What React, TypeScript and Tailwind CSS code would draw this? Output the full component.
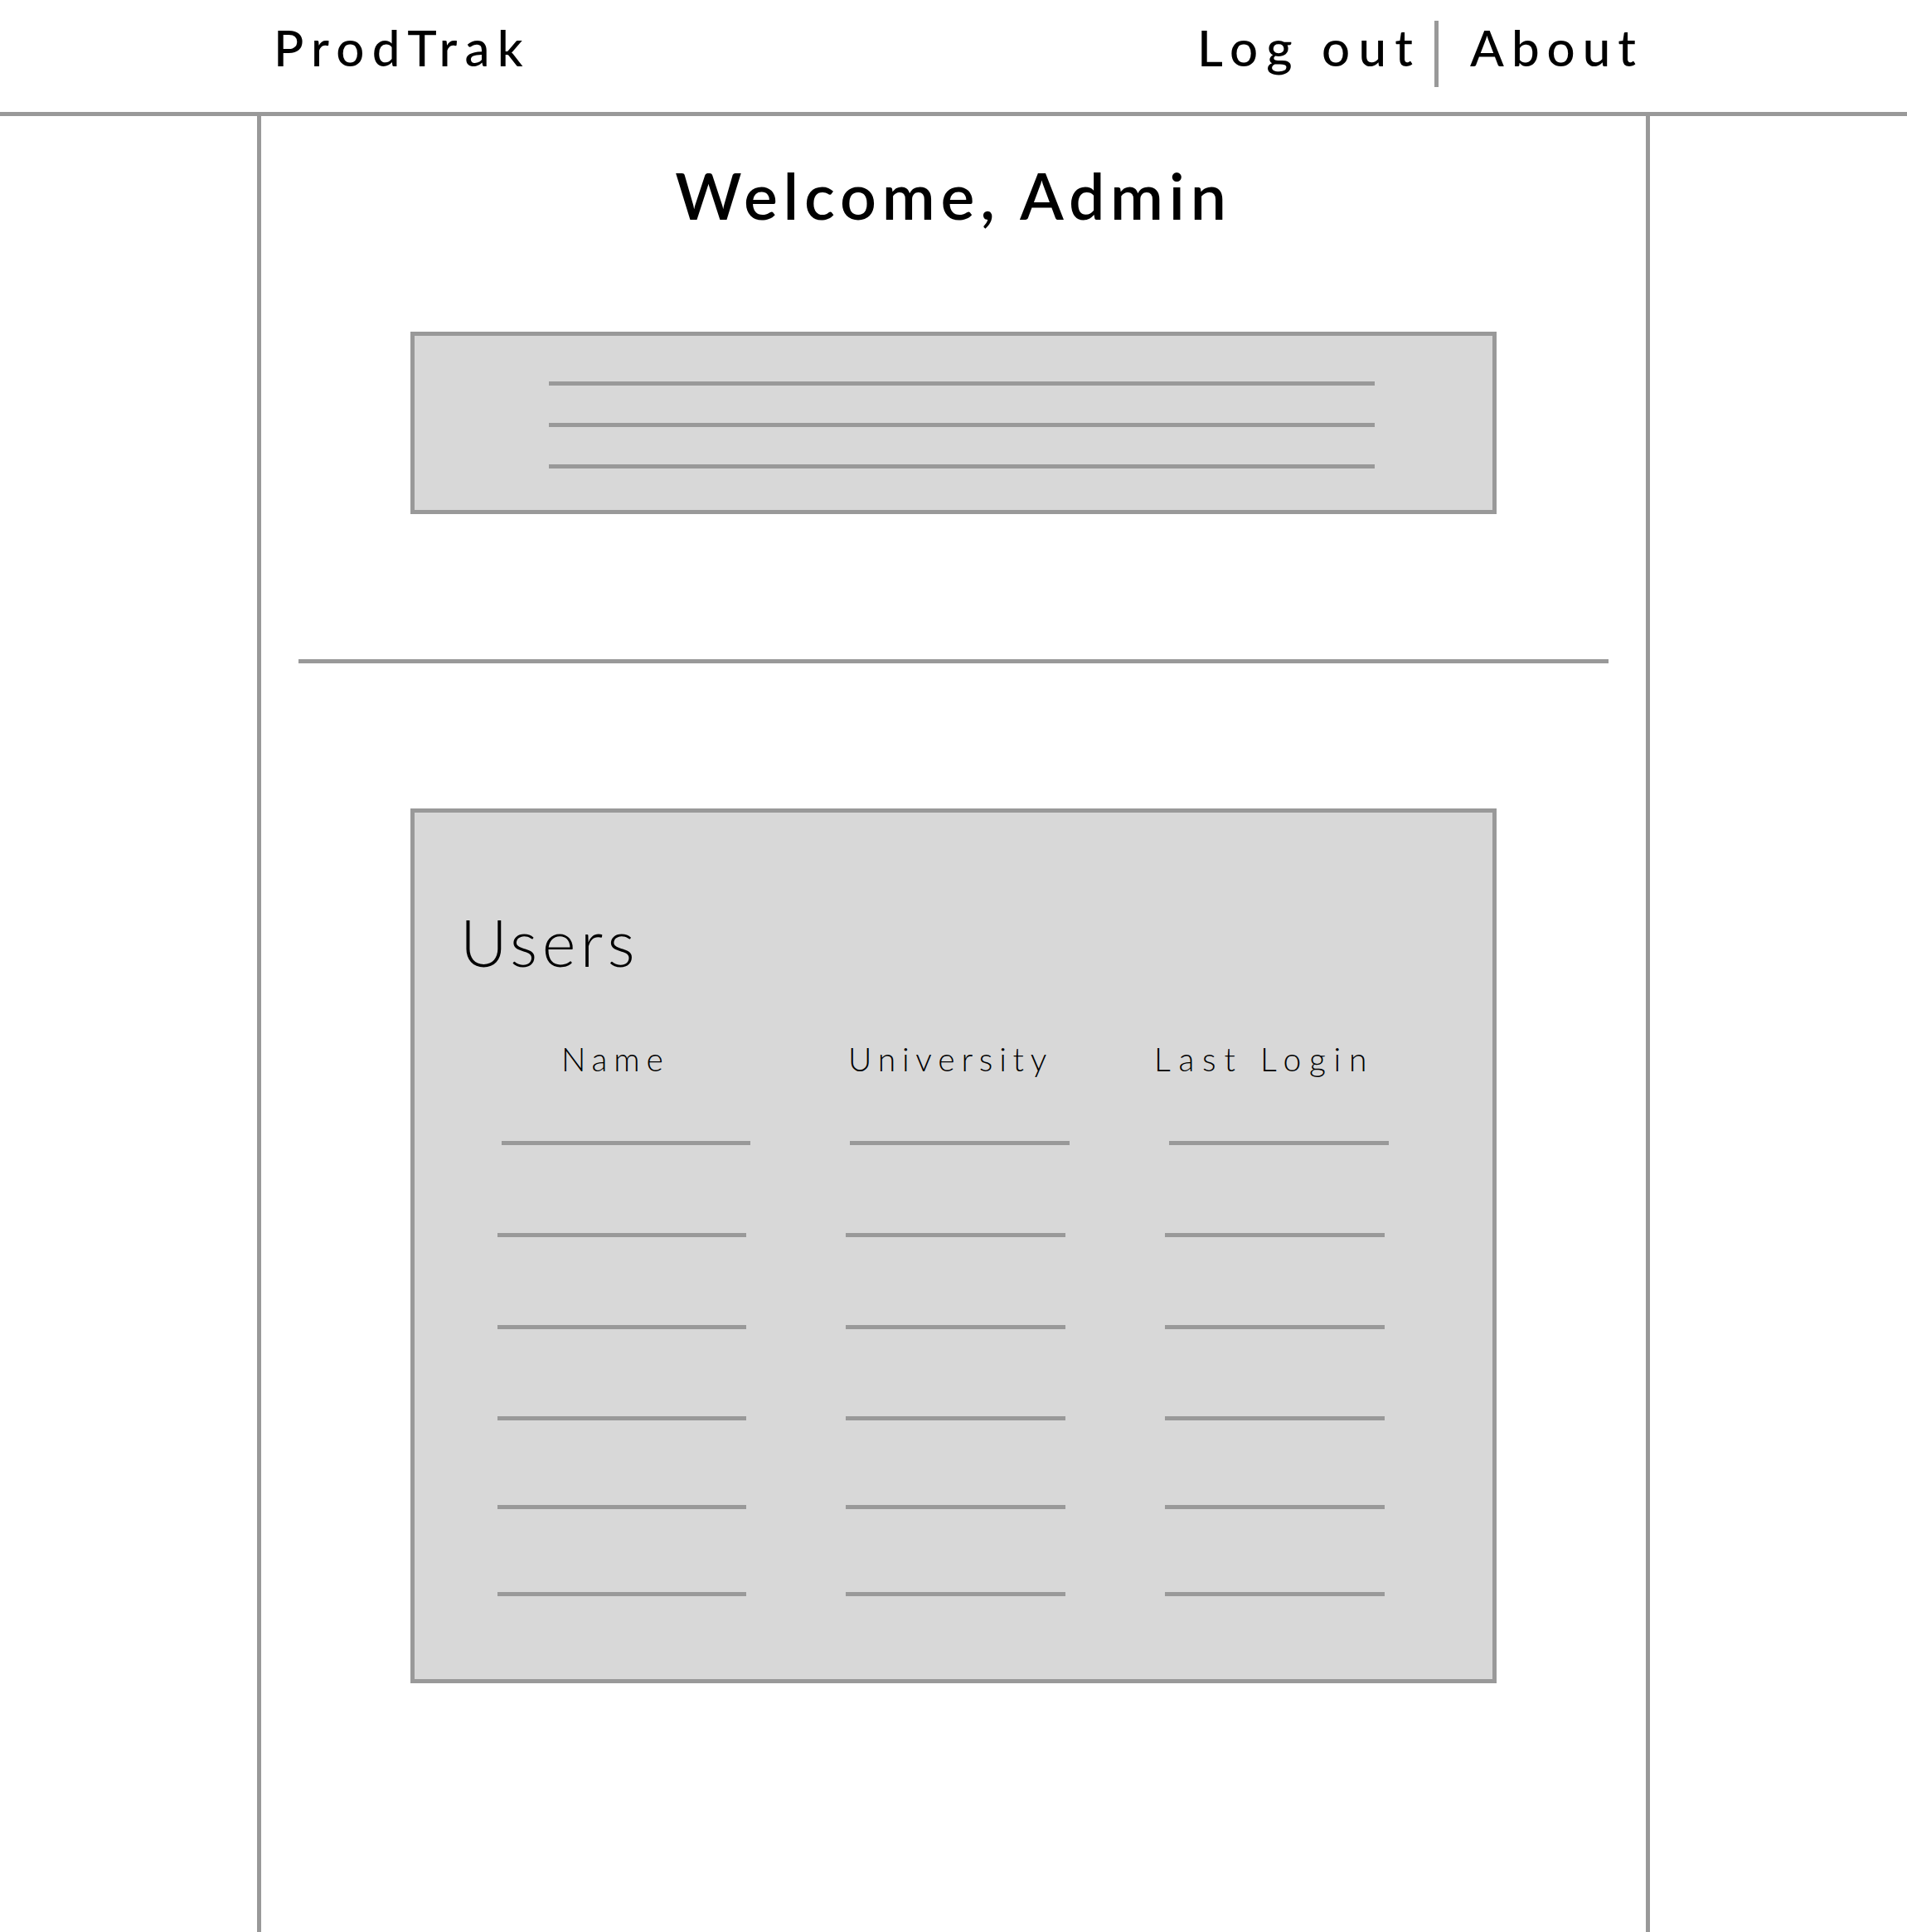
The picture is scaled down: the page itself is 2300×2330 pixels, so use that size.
const font = { fontFamily: "Lato, 'Open Sans', sans-serif" };

const rowGaps = ["mt-0", "mt-[106px]", "mt-[106px]", "mt-[105px]", "mt-[102px]", "mt-[100px]"];

function Line({ className }: { className: string }) {
  return <div className={`h-[5px] bg-[#999999] ${className}`} />;
}

export default function App() {
  return (
    <div className="min-h-[2330px] bg-white text-black" style={font}>
      <header className="flex h-[140px] border-b-[5px] border-[#999999]">
        <div className="pl-[330px] pt-[27px] text-[60px] font-medium leading-none tracking-[0.155em]">
          ProdTrak
        </div>
        <nav className="ml-auto flex items-start pr-[318px]">
          <span className="pt-[27px] text-[60px] font-medium leading-none tracking-[0.17em]">Log out</span>
          <span className="ml-[16px] mt-[25px] h-[80px] w-[5px] bg-[#999999]" />
          <span className="ml-[38px] pt-[27px] text-[60px] font-medium leading-none tracking-[0.15em]">About</span>
        </nav>
      </header>

      <main className="mx-auto min-h-[2190px] w-[1680px] border-x-[5px] border-[#999999]">
        <h1 className="pt-[57px] text-center text-[77px] font-semibold leading-none tracking-[0.088em]">
          Welcome, Admin
        </h1>

        <section className="mx-auto mt-[126px] h-[220px] w-[1310px] border-[5px] border-[#999999] bg-[#d8d8d8] pt-[55px]">
          <div className="ml-[162px] flex w-[996px] flex-col gap-[45px]">
            <Line className="w-full" />
            <Line className="w-full" />
            <Line className="w-full" />
          </div>
        </section>

        <Line className="ml-[45px] mt-[175px] w-[1580px]" />

        <section className="mx-auto mt-[175px] h-[1055px] w-[1310px] border-[5px] border-[#999999] bg-[#d8d8d8]">
          <h2 className="pl-[55px] pt-[117px] text-[78px] font-light leading-none tracking-[0.07em]">Users</h2>

          <div className="mt-[83px] flex text-[39px] font-light leading-none tracking-[0.2em]">
            <span className="ml-[177px] w-[346px]">Name</span>
            <span className="w-[369px]">University</span>
            <span className="tracking-[0.25em]">Last Login</span>
          </div>

          <div className="mt-[79px] flex flex-col">
            {rowGaps.map((gap, i) => (
              <div
                key={i}
                className={`grid grid-cols-[300px_265px_265px] gap-x-[120px] ${gap} ${i === 0 ? "pl-[105px]" : "pl-[100px]"}`}
              >
                <Line className="" />
                <Line className="" />
                <Line className="" />
              </div>
            ))}
          </div>
        </section>
      </main>
    </div>
  );
}
